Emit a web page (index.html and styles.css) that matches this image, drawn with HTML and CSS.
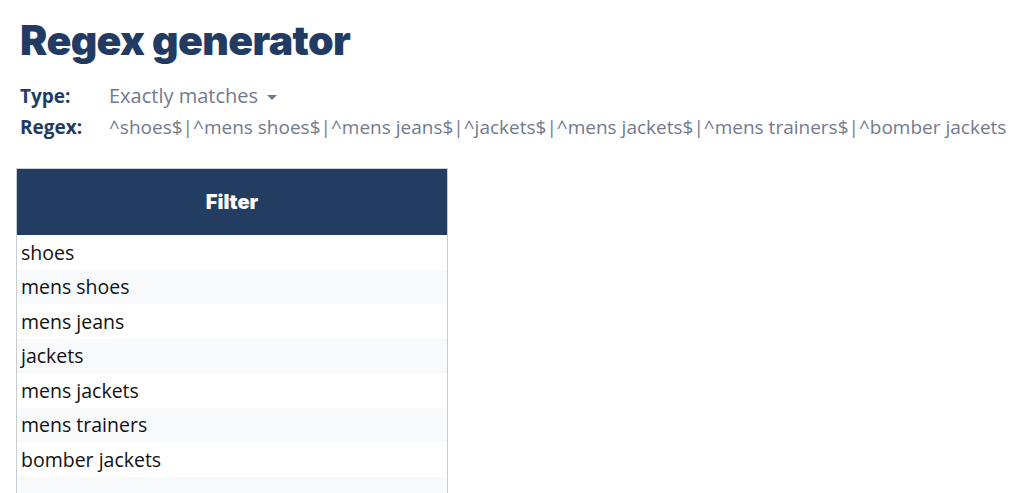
FILE: index.html
```html
<!DOCTYPE html>
<html>
<head>
  <title>Regex generator</title>
  <link rel="stylesheet" href="styles.css">
</head>
<body>
  <h1>Regex generator</h1>
  <div class="meta">
    <div class="meta-row">
      <span class="label">Type:</span>
      <span class="value type">Exactly matches <span class="caret"></span></span>
    </div>
    <div class="meta-row">
      <span class="label">Regex:</span>
      <span class="value">^shoes$|^mens shoes$|^mens jeans$|^jackets$|^mens jackets$|^mens trainers$|^bomber jackets</span>
    </div>
  </div>

  <table class="filter">
    <thead>
      <tr><th>Filter</th></tr>
    </thead>
    <tbody>
      <tr><td>shoes</td></tr>
      <tr><td>mens shoes</td></tr>
      <tr><td>mens jeans</td></tr>
      <tr><td>jackets</td></tr>
      <tr><td>mens jackets</td></tr>
      <tr><td>mens trainers</td></tr>
      <tr><td>bomber jackets</td></tr>
      <tr><td>&nbsp;</td></tr>
    </tbody>
  </table>
</body>
</html>
```

FILE: styles.css
```css
body {
  margin: 0;
  padding: 0 16px;
  font-family: "Open Sans", Arial, sans-serif;
  background-color: #fff;
  color: #111;
}

h1 {
  margin: 0;
  padding: 16px 0 0 4px;
  font-family: Inter, Arial, sans-serif;
  font-weight: 900;
  font-size: 41px;
  line-height: 48px;
  color: #223b63;
  letter-spacing: -0.6px;
}

.meta {
  margin-top: 16px;
  padding-left: 4px;
}

.meta-row {
  display: flex;
  height: 31px;
  align-items: center;
  font-size: 19px;
}

.label {
  width: 89px;
  font-weight: 700;
  color: #223b63;
}

.value {
  color: #737a8c;
  white-space: nowrap;
}

.type {
  font-size: 20px;
}

.caret {
  display: inline-block;
  width: 0;
  height: 0;
  margin-left: 4px;
  vertical-align: middle;
  border-left: 5px solid transparent;
  border-right: 5px solid transparent;
  border-top: 5px solid #737a8c;
}

.filter {
  margin-top: 26px;
  width: 432px;
  border-collapse: collapse;
  border: 1px solid #c9ccd1;
  border-bottom: none;
}

.filter th {
  height: 66px;
  padding: 0;
  background-color: #233c62;
  color: #fff;
  font-family: Inter, Arial, sans-serif;
  font-weight: 900;
  font-size: 20px;
}

.filter td {
  height: 34.5px;
  padding: 0 4px;
  font-size: 19.5px;
  color: #111;
}

.filter tbody tr:nth-child(even) td {
  background-color: #f8f9fb;
}
```
